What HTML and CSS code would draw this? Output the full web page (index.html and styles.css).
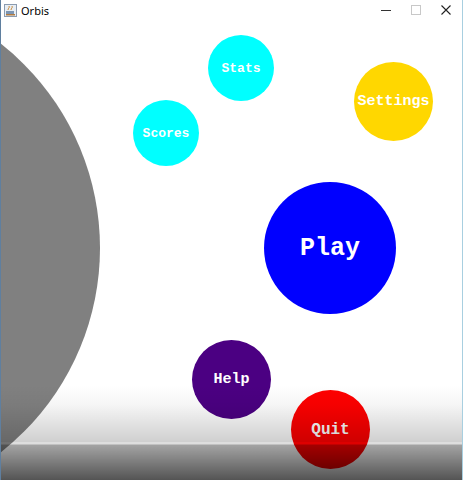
FILE: index.html
```html
<!DOCTYPE html>
<html>
<head>
<meta charset="utf-8">
<title>Orbis</title>
<link rel="stylesheet" href="styles.css">
</head>
<body>
<div class="window">
  <div class="titlebar">
    <svg class="app-icon" width="13" height="13" viewBox="0 0 13 13">
      <rect x="0.5" y="0.5" width="12" height="12" fill="#e8eef4" stroke="#8a9bb0"/>
      <rect x="2" y="7" width="8" height="4" fill="#7d96b3"/>
      <path d="M4 6 C4 4 6 4 5 2 M7 6 C7 4 9 4 8 2" stroke="#c98a3a" stroke-width="1" fill="none"/>
      <rect x="2" y="10" width="9" height="1.5" fill="#b07a40"/>
    </svg>
    <span class="title">Orbis</span>
    <div class="controls">
      <span class="ctl min"><svg width="10" height="10" viewBox="0 0 10 10"><path d="M0 5.5 H10" stroke="#333" stroke-width="1"/></svg></span>
      <span class="ctl max"><svg width="10" height="10" viewBox="0 0 10 10"><rect x="0.5" y="0.5" width="9" height="9" fill="none" stroke="#c8c8c8"/></svg></span>
      <span class="ctl close"><svg width="10" height="10" viewBox="0 0 10 10"><path d="M0.5 0.5 L9.5 9.5 M9.5 0.5 L0.5 9.5" stroke="#222" stroke-width="1.1"/></svg></span>
    </div>
  </div>
  <div class="stage">
    <div class="planet"></div>
    <div class="orb stats">Stats</div>
    <div class="orb scores">Scores</div>
    <div class="orb settings">Settings</div>
    <div class="orb play">Play</div>
    <div class="orb help">Help</div>
    <div class="orb quit">Quit</div>
    <div class="shade"></div>
  </div>
</div>
</body>
</html>
```
FILE: styles.css
```css
html, body {
  margin: 0;
  padding: 0;
  background: #ffffff;
}
.window {
  width: 463px;
  height: 480px;
  box-sizing: border-box;
  border-left: 1px solid #5f7f9f;
  border-right: 1px solid #a8cfe0;
  overflow: hidden;
  display: flex;
  flex-direction: column;
}
.titlebar {
  height: 20px;
  flex: 0 0 20px;
  display: flex;
  align-items: center;
  padding-left: 3px;
  background: #ffffff;
  font-family: "Noto Sans", "DejaVu Sans", sans-serif;
  font-size: 11px;
  color: #000;
}
.app-icon {
  margin-right: 4px;
}
.title {
  line-height: 1;
}
.controls {
  margin-left: auto;
  display: flex;
  align-items: center;
}
.ctl {
  width: 30px;
  height: 20px;
  display: flex;
  align-items: center;
  justify-content: center;
}
.ctl.close {
  width: 30px;
  margin-right: 1px;
}
.stage {
  position: relative;
  flex: 1;
  overflow: hidden;
  background: #ffffff;
}
.planet {
  position: absolute;
  left: -421px;
  top: -32px;
  width: 520px;
  height: 520px;
  border-radius: 50%;
  background: #808080;
}
.orb {
  position: absolute;
  border-radius: 50%;
  display: flex;
  align-items: center;
  justify-content: center;
  color: #ffffff;
  font-family: "Liberation Mono", "Courier New", monospace;
  font-weight: bold;
  white-space: nowrap;
}
.stats {
  left: 207px; top: 15px; width: 66px; height: 66px;
  background: #00ffff; font-size: 13px;
}
.scores {
  left: 132px; top: 80px; width: 66px; height: 66px;
  background: #00ffff; font-size: 13px;
}
.settings {
  left: 353px; top: 42px; width: 79px; height: 79px;
  background: #ffd700; font-size: 15px;
}
.play {
  left: 263px; top: 162px; width: 132px; height: 132px;
  background: #0000ff; font-size: 25px;
}
.help {
  left: 191px; top: 320px; width: 79px; height: 79px;
  background: #4b0082; font-size: 15px;
}
.quit {
  left: 290px; top: 370px; width: 79px; height: 79px;
  background: #ff0000; font-size: 16px;
}
.shade {
  position: absolute;
  left: 0;
  right: 0;
  bottom: 0;
  height: 95px;
  pointer-events: none;
  background: linear-gradient(to bottom,
    rgba(0,0,0,0) 0px,
    rgba(0,0,0,0.04) 20px,
    rgba(0,0,0,0.19) 57px,
    rgba(0,0,0,0.13) 57px,
    rgba(0,0,0,0.13) 59px,
    rgba(0,0,0,0.36) 60px,
    rgba(0,0,0,0.67) 95px);
}
```
